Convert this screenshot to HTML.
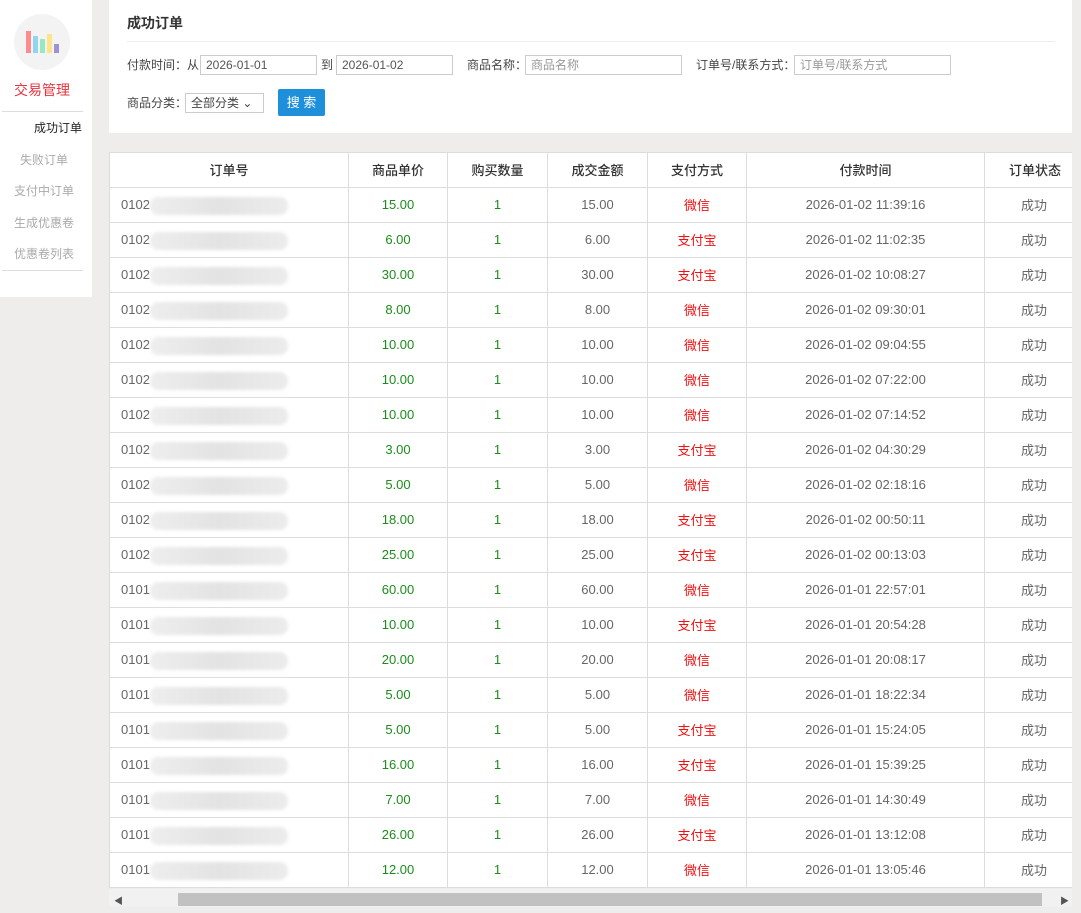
<!DOCTYPE html>
<html><head><meta charset="utf-8"><style>
*{margin:0;padding:0;box-sizing:border-box}
body{width:1081px;height:913px;background:#eeedeb;font-family:"Liberation Sans","Noto Sans CJK SC",sans-serif;font-size:13px;color:#333;position:relative;overflow:hidden;line-height:16px}
.side{position:absolute;left:0;top:0;width:92px;height:297px;background:#fff}
.circ{position:absolute;left:14px;top:14px;width:56px;height:56px;border-radius:50%;background:#f3f3f3}
.bar{position:absolute;width:5px}
.title{position:absolute;left:0;width:84px;top:82px;text-align:center;color:#e8343f;font-size:14px}
.hr{position:absolute;left:2px;width:81px;height:1px;background:#ddd}
.nav{position:absolute;font-size:12px;color:#aaa}
.top{position:absolute;left:109px;top:0;width:963px;height:133px;background:#fff}
.lbl{position:absolute;font-size:12px;color:#444;top:57px}
.inp{position:absolute;top:55px;height:20px;border:1px solid #ccc;font-size:12px;color:#555;padding:1px 5px;line-height:16px}
.tw{position:absolute;left:109px;top:152px;width:963px;height:736px;overflow:hidden;background:#fff}
table{border-collapse:collapse;width:1060px;table-layout:fixed}
td,th{height:35px;border:1px solid #ddd;text-align:center;font-size:13px;color:#666;font-weight:normal;white-space:nowrap;line-height:16px;vertical-align:middle}
th{color:#333;font-family:"Noto Sans CJK SC",sans-serif;font-weight:500}
td.g{color:#1a8c1a}td.r{color:#f01010}
td.o{text-align:left;padding-left:11px;position:relative}
.blur{position:absolute;left:40px;top:9px;width:138px;height:18px;background:linear-gradient(90deg,#eeeeee,#e3e3e3 50%,#ececec);border-radius:8px;filter:blur(1.5px)}
.sb{position:absolute;left:109px;top:889px;width:963px;height:18px;background:#f1f1f1}
.th{position:absolute;left:178px;top:893px;width:864px;height:13px;background:#c1c1c1}
.c{font-family:"Noto Sans CJK SC",sans-serif;display:inline-block;line-height:16px;vertical-align:middle;position:relative;top:0px}
</style></head><body>
<div class="side">
<div class="circ"></div>
<div class="bar" style="left:26px;top:31px;height:22px;background:#ff8c8c"></div>
<div class="bar" style="left:33px;top:36px;height:17px;background:#93d4ef"></div>
<div class="bar" style="left:40px;top:39px;height:14px;background:#98e8c2"></div>
<div class="bar" style="left:47px;top:34px;height:19px;background:#ffe38a"></div>
<div class="bar" style="left:54px;top:44px;height:9px;background:#9d92d4"></div>
<div class="title">交易管理</div>
<div class="hr" style="top:111px"></div>
<div class="nav" style="left:34px;top:120px;color:#222">成功订单</div>
<div class="nav" style="left:20px;top:152px">失败订单</div>
<div class="nav" style="left:14px;top:183px">支付中订单</div>
<div class="nav" style="left:14px;top:215px">生成优惠卷</div>
<div class="nav" style="left:14px;top:246px">优惠卷列表</div>
<div class="hr" style="top:270px"></div>
</div>
<div class="top">
<div style="position:absolute;left:18px;top:15px;font-weight:bold;font-size:14px;color:#333">成功订单</div>
<div style="position:absolute;left:18px;top:41px;width:928px;height:1px;background:#eee"></div>
<div class="lbl" style="left:18px">付款时间：从</div>
<div class="inp" style="left:91px;width:117px">2026-01-01</div>
<div class="lbl" style="left:212px">到</div>
<div class="inp" style="left:227px;width:117px">2026-01-02</div>
<div class="lbl" style="left:358px">商品名称：</div>
<div class="inp" style="left:416px;width:157px;color:#999">商品名称</div>
<div class="lbl" style="left:587px">订单号/联系方式：</div>
<div class="inp" style="left:685px;width:157px;color:#999">订单号/联系方式</div>
<div class="lbl" style="left:18px;top:95px">商品分类：</div>
<div class="inp" style="left:76px;top:93px;width:79px;height:20px;color:#444">全部分类 ⌄</div>
<div style="position:absolute;left:169px;top:89px;width:47px;height:27px;background:#1e90db;color:#fff;border-radius:2px;text-align:center;line-height:27px;font-size:13px">搜 索</div>
</div>
<div class="tw"><table>
<colgroup><col style="width:239px"><col style="width:99px"><col style="width:100px"><col style="width:100px"><col style="width:99px"><col style="width:238px"><col style="width:185px"></colgroup>
<tr><th>订单号</th><th>商品单价</th><th>购买数量</th><th>成交金额</th><th>支付方式</th><th>付款时间</th><th style="text-align:left;padding-left:24px">订单状态</th></tr>
<tbody id="b"></tbody>
</table></div>
<div class="sb"></div><div class="th"></div>
<div style="position:absolute;left:114px;top:893px;font-size:9px;color:#555">◀</div>
<div style="position:absolute;left:1060px;top:893px;font-size:9px;color:#555">▶</div>
<script>
var d=[["0102","15.00","微信","2026-01-02 11:39:16"],["0102","6.00","支付宝","2026-01-02 11:02:35"],["0102","30.00","支付宝","2026-01-02 10:08:27"],["0102","8.00","微信","2026-01-02 09:30:01"],["0102","10.00","微信","2026-01-02 09:04:55"],["0102","10.00","微信","2026-01-02 07:22:00"],["0102","10.00","微信","2026-01-02 07:14:52"],["0102","3.00","支付宝","2026-01-02 04:30:29"],["0102","5.00","微信","2026-01-02 02:18:16"],["0102","18.00","支付宝","2026-01-02 00:50:11"],["0102","25.00","支付宝","2026-01-02 00:13:03"],["0101","60.00","微信","2026-01-01 22:57:01"],["0101","10.00","支付宝","2026-01-01 20:54:28"],["0101","20.00","微信","2026-01-01 20:08:17"],["0101","5.00","微信","2026-01-01 18:22:34"],["0101","5.00","支付宝","2026-01-01 15:24:05"],["0101","16.00","支付宝","2026-01-01 15:39:25"],["0101","7.00","微信","2026-01-01 14:30:49"],["0101","26.00","支付宝","2026-01-01 13:12:08"],["0101","12.00","微信","2026-01-01 13:05:46"]];
var h="";d.forEach(function(r){h+='<tr><td class="o">'+r[0]+'<div class="blur"></div></td><td class="g">'+r[1]+'</td><td class="g">1</td><td>'+r[1]+'</td><td class="r"><span class="c">'+r[2]+'</span></td><td>'+r[3]+'</td><td style="text-align:left;padding-left:36px"><span class="c">成功</span></td></tr>'});
document.getElementById("b").innerHTML=h;
</script>
</body></html>
